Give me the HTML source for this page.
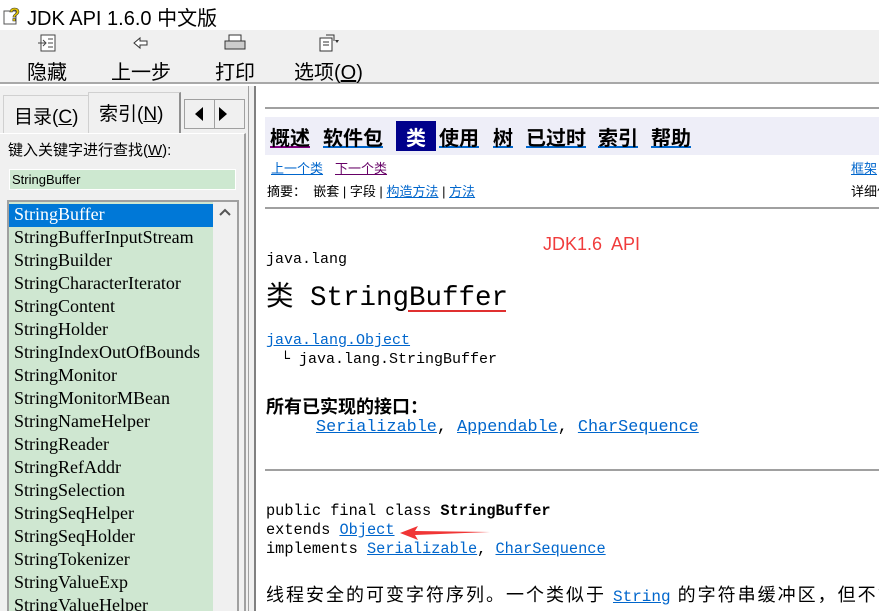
<!DOCTYPE html><html><head><meta charset="utf-8"><style>
*{margin:0;padding:0;box-sizing:border-box}
body{width:879px;height:611px;overflow:hidden;position:relative;background:#fff;font-family:"Liberation Sans","Noto Sans CJK SC",sans-serif}
.a{position:absolute;white-space:nowrap}
.m{font-family:"Liberation Mono","Noto Sans CJK SC",monospace}
.lk{color:#0066cc;text-decoration:underline}
.nav{font-weight:bold;font-size:20px;color:#000;text-decoration:underline;text-decoration-color:#0066cc}
.it{position:absolute;left:14px;font-family:"Liberation Serif",serif;font-size:18px;line-height:23px;color:#000}
hr{position:absolute;border:0;height:2px;background:#a0a0a0}
</style></head><body>
<div class="a" style="left:0;top:0;width:879px;height:30px;background:#fff"></div>
<svg class="a" style="left:3px;top:5px" width="20" height="20"><rect x="1" y="6" width="12" height="13" fill="#fff" stroke="#555"/><text x="6" y="16" font-size="18" font-weight="bold" fill="#e8c800" stroke="#333" stroke-width=".6" font-family="Liberation Sans">?</text></svg>
<div class="a" style="left:27px;top:2px;font-size:20px;color:#000">JDK API 1.6.0 中文版</div>
<div class="a" style="left:0;top:30px;width:879px;height:54px;background:#f0f0f0;border-bottom:2px solid #a8a8a8"></div>
<svg class="a" style="left:37px;top:34px" width="20" height="18"><rect x="4" y="1" width="14" height="16" fill="#fff" stroke="#444"/><path d="M1 9h8M6 6l3 3-3 3M11 5h5M11 9h5M11 13h5" stroke="#444" fill="none"/></svg>
<svg class="a" style="left:133px;top:36px" width="16" height="14"><path d="M1 7l6-5v3h7v4H7v3z" fill="#fff" stroke="#333"/></svg>
<svg class="a" style="left:224px;top:34px" width="22" height="18"><rect x="5" y="1" width="12" height="6" fill="#fff" stroke="#333"/><rect x="1" y="7" width="20" height="8" fill="#ccc" stroke="#333"/></svg>
<svg class="a" style="left:318px;top:34px" width="22" height="18"><rect x="2" y="4" width="12" height="13" fill="#fff" stroke="#333"/><path d="M5 8h6M5 11h6M8 1l8 0 0 6" stroke="#333" fill="none"/><path d="M17 6l4 0-2 3z" fill="#333"/></svg>
<div class="a" style="left:27px;top:56px;font-size:20px">隐藏</div>
<div class="a" style="left:111px;top:56px;font-size:20px">上一步</div>
<div class="a" style="left:215px;top:56px;font-size:20px">打印</div>
<div class="a" style="left:294px;top:56px;font-size:20px">选项(<u>O</u>)</div>
<div class="a" style="left:0;top:86px;width:256px;height:525px;background:#f0f0f0"></div>
<div class="a" style="left:248px;top:86px;width:8px;height:525px;background:#f0f0f0;border-left:1px solid #a0a0a0;border-right:2px solid #808080"></div>
<div class="a" style="left:3px;top:95px;width:86px;height:38px;border:1px solid #d0d0d0;border-bottom:0;background:#f0f0f0;font-size:19px;padding:6px 0 0 10px">目录(<u>C</u>)</div>
<div class="a" style="left:88px;top:92px;width:93px;height:42px;border:1px solid #d0d0d0;border-right:2px solid #909090;border-bottom:0;background:#f0f0f0;font-size:19px;padding:6px 0 0 10px">索引(<u>N</u>)</div>
<div class="a" style="left:184px;top:99px;width:31px;height:30px;border:1px solid #a0a0a0;background:#f0f0f0"></div>
<div class="a" style="left:214px;top:99px;width:31px;height:30px;border:1px solid #a0a0a0;background:#f0f0f0"></div>
<svg class="a" style="left:192px;top:106px" width="40" height="16"><path d="M11 1v14L3 8z M27 1v14l8-7z" fill="#000"/></svg>
<div class="a" style="left:0;top:133px;width:246px;height:478px;border-top:1px solid #fff;border-right:2px solid #a0a0a0"></div>
<div class="a" style="left:8px;top:139px;font-size:15px">键入关键字进行查找(<u>W</u>):</div>
<div class="a" style="left:9px;top:169px;width:227px;height:21px;background:#cde8d0;border:1px solid #fff;font-size:13px;padding:2px 2px;font-family:'Liberation Sans',sans-serif">StringBuffer</div>
<div class="a" style="left:7px;top:200px;width:232px;height:411px;border:2px solid #a0a0a0;border-bottom:0;background:#cfe7d1"></div>
<div class="a" style="left:213px;top:202px;width:24px;height:409px;background:#f0f0f0"></div>
<svg class="a" style="left:218px;top:207px" width="14" height="10"><path d="M2 8l5-5 5 5" stroke="#555" stroke-width="2" fill="none"/></svg>
<div class="a" style="left:9px;top:204px;width:204px;height:23px;background:#0078d7"></div>
<div style="position:absolute;left:0;top:203px;width:213px;height:408px;overflow:hidden">
<div class="it" style="top:0;color:#fff">StringBuffer</div>
<div class="it" style="top:23px">StringBufferInputStream</div>
<div class="it" style="top:46px">StringBuilder</div>
<div class="it" style="top:69px">StringCharacterIterator</div>
<div class="it" style="top:92px">StringContent</div>
<div class="it" style="top:115px">StringHolder</div>
<div class="it" style="top:138px">StringIndexOutOfBounds</div>
<div class="it" style="top:161px">StringMonitor</div>
<div class="it" style="top:184px">StringMonitorMBean</div>
<div class="it" style="top:207px">StringNameHelper</div>
<div class="it" style="top:230px">StringReader</div>
<div class="it" style="top:253px">StringRefAddr</div>
<div class="it" style="top:276px">StringSelection</div>
<div class="it" style="top:299px">StringSeqHelper</div>
<div class="it" style="top:322px">StringSeqHolder</div>
<div class="it" style="top:345px">StringTokenizer</div>
<div class="it" style="top:368px">StringValueExp</div>
<div class="it" style="top:391px">StringValueHelper</div>
</div>
<hr style="left:265px;top:107px;width:614px">
<div class="a" style="left:265px;top:117px;width:614px;height:38px;background:#eeeef8"></div>
<div class="a" style="left:396px;top:121px;width:40px;height:30px;background:#00008b"></div>
<div class="a nav" style="left:270px;top:122px;text-decoration-color:#800080">概述</div>
<div class="a nav" style="left:323px;top:122px">软件包</div>
<div class="a" style="left:406px;top:122px;font-weight:bold;font-size:20px;color:#fff">类</div>
<div class="a nav" style="left:439px;top:122px">使用</div>
<div class="a nav" style="left:493px;top:122px">树</div>
<div class="a nav" style="left:526px;top:122px">已过时</div>
<div class="a nav" style="left:598px;top:122px">索引</div>
<div class="a nav" style="left:651px;top:122px">帮助</div>
<div class="a lk" style="left:271px;top:158px;font-size:13px">上一个类</div>
<div class="a" style="left:335px;top:158px;font-size:13px;color:#660066;text-decoration:underline">下一个类</div>
<div class="a lk" style="left:851px;top:158px;font-size:13px">框架</div>
<div class="a" style="left:267px;top:181px;font-size:13px">摘要：&nbsp; 嵌套 | 字段 | <span class="lk">构造方法</span> | <span class="lk">方法</span></div>
<div class="a" style="left:851px;top:181px;font-size:13px">详细信息</div>
<hr style="left:265px;top:207px;width:614px">
<div class="a" style="left:543px;top:234px;font-size:18px;color:#f03c3c">JDK1.6&nbsp; API</div>
<div class="a m" style="left:266px;top:251px;font-size:15px">java.lang</div>
<div class="a" style="left:266px;top:273px;font-size:27.5px;font-family:'Liberation Mono','Noto Sans CJK SC',monospace">类 StringBuffer</div>
<div class="a" style="left:408px;top:310px;width:98px;height:2px;background:#e03030"></div>
<div class="a m lk" style="left:266px;top:332px;font-size:15px">java.lang.Object</div>
<div class="a m" style="left:281px;top:351px;font-size:15px">└ java.lang.StringBuffer</div>
<div class="a" style="left:266px;top:393px;font-size:18px;font-weight:bold">所有已实现的接口：</div>
<div class="a m" style="left:316px;top:418px;font-size:16.8px"><span class="lk">Serializable</span>, <span class="lk">Appendable</span>, <span class="lk">CharSequence</span></div>
<hr style="left:265px;top:469px;width:614px">
<div class="a m" style="left:266px;top:502px;font-size:15.3px">public final class <b>StringBuffer</b></div>
<div class="a m" style="left:266px;top:521px;font-size:15.3px">extends <span class="lk">Object</span></div>
<div class="a m" style="left:266px;top:540px;font-size:15.3px">implements <span class="lk">Serializable</span>, <span class="lk">CharSequence</span></div>
<svg class="a" style="left:398px;top:525px" width="95" height="16"><path d="M2 8L20 1 17 6 92 7 17 10 20 15z" fill="#f03535"/></svg>
<div class="a" style="left:266px;top:581px;width:613px;overflow:hidden;font-size:18px;letter-spacing:2px">线程安全的可变字符序列。一个类似于 <span class="m lk" style="font-size:16px;letter-spacing:0">String</span> 的字符串缓冲区，但不能修改</div>
</body></html>
